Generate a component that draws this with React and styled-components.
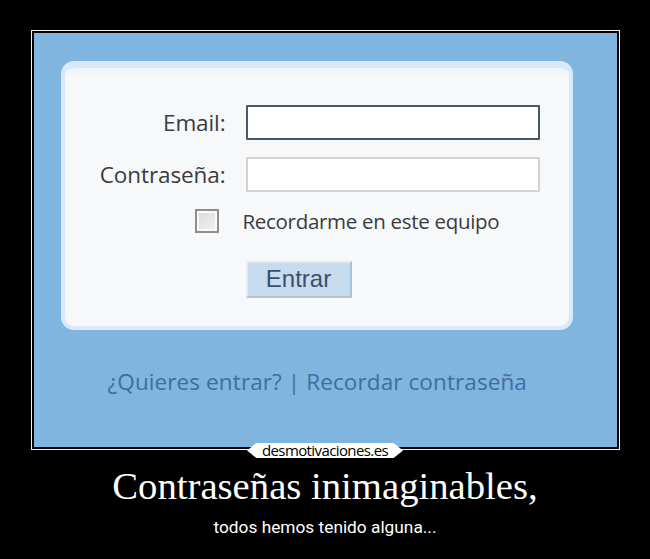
import React from "react";
import styled, { createGlobalStyle } from "styled-components";

const Global = createGlobalStyle`
  html, body { margin: 0; padding: 0; background: #000; }
  #root { width: 650px; height: 559px; }
`;

const Poster = styled.div`
  width: 650px;
  height: 559px;
  background: #000;
  display: flex;
  flex-direction: column;
  align-items: center;
  padding-top: 30px;
  box-sizing: border-box;
`;

const Frame = styled.div`
  position: relative;
  width: 589px;
  box-sizing: border-box;
  border: 1px solid #f2f2f2;
  padding: 2px;
  background: #000;
`;

const Screen = styled.div`
  height: 414px;
  background: #80b5df;
  box-sizing: border-box;
  padding: 28px 44px 0 27px;
  display: flex;
  flex-direction: column;
`;

const Panel = styled.div`
  height: 269px;
  box-sizing: border-box;
  border-radius: 13px;
  border: 4px solid #d9e9f7;
  border-top-width: 7px;
  background: linear-gradient(#eef4fa 0px, #f6f8fa 8px, #f7f8fa 100%);
  padding-top: 37px;
  display: grid;
  grid-template-columns: 161px 294px;
  column-gap: 20px;
  grid-template-rows: 35px 35px 24px 37px;
  row-gap: 17px;
  align-items: center;
`;

const Label = styled.label`
  font-family: "Open Sans", "DejaVu Sans", sans-serif;
  font-size: 22.5px;
  color: #3b3b3b;
  text-align: right;
  letter-spacing: -0.1px;
`;

const Field = styled.div`
  height: 35px;
  box-sizing: border-box;
  background: #fff;
  border: 2px solid ${(p) => (p.$focused ? "#4b5667" : "#d3d3d3")};
  border-radius: 1px;
`;

const CheckCell = styled.div`
  display: flex;
  justify-content: flex-end;
  padding-right: 7px;
`;

const Check = styled.span`
  display: block;
  width: 24px;
  height: 24px;
  box-sizing: border-box;
  border: 2px solid #8f8f8f;
  background: linear-gradient(135deg, #d9d9d9, #f4f4f4);
  box-shadow: inset 0 0 0 2px #fafafa;
`;

const CheckText = styled.span`
  font-family: "Open Sans", "DejaVu Sans", sans-serif;
  font-size: 20.5px;
  color: #3b3b3b;
  margin-left: -3px;
  letter-spacing: -0.3px;
`;

const Button = styled.button`
  grid-column: 2;
  margin-top: 22px;
  width: 106px;
  height: 37px;
  box-sizing: border-box;
  background: #c6dbee;
  border: 2px solid;
  border-color: #e2ecf6 #a4c3e2 #b9c4cf #e2ecf6;
  font-family: "Liberation Sans", Arial, sans-serif;
  font-size: 24px;
  color: #3c4f6e;
  padding: 0 0 2px 0;
  cursor: pointer;
`;

const Links = styled.div`
  margin-top: 36px;
  padding-left: 47px;
  font-family: "Open Sans", "DejaVu Sans", sans-serif;
  font-size: 22.5px;
  color: #3f6e9c;
  letter-spacing: 0.1px;
`;

const Logo = styled.div`
  position: absolute;
  left: 50%;
  bottom: -9px;
  transform: translateX(-50%);
  width: 156px;
  height: 15px;
  background: #fff;
  clip-path: polygon(6% 0, 94% 0, 100% 50%, 94% 100%, 6% 100%, 0 50%);
  border-radius: 4px;
  display: flex;
  align-items: center;
  justify-content: center;
  font-family: "Open Sans", sans-serif;
  font-size: 15px;
  line-height: 15px;
  color: #000;
  letter-spacing: -0.6px;
`;

const Title = styled.h1`
  margin: 13px 0 0;
  font-family: "Liberation Serif", "Times New Roman", serif;
  font-weight: normal;
  font-size: 38.7px;
  line-height: 46px;
  color: #fff;
`;

const Subtitle = styled.p`
  margin: 8px 0 0;
  font-family: Roboto, "Liberation Sans", Arial, sans-serif;
  font-size: 17.3px;
  color: #fff;
`;

export default function App() {
  return (
    <Poster>
      <Global />
      <Frame>
        <Screen>
          <Panel>
            <Label>Email:</Label>
            <Field $focused />
            <Label>Contraseña:</Label>
            <Field />
            <CheckCell>
              <Check />
            </CheckCell>
            <CheckText>Recordarme en este equipo</CheckText>
            <Button>Entrar</Button>
          </Panel>
          <Links>¿Quieres entrar? | Recordar contraseña</Links>
        </Screen>
        <Logo>desmotivaciones.es</Logo>
      </Frame>
      <Title>Contraseñas inimaginables,</Title>
      <Subtitle>todos hemos tenido alguna...</Subtitle>
    </Poster>
  );
}
